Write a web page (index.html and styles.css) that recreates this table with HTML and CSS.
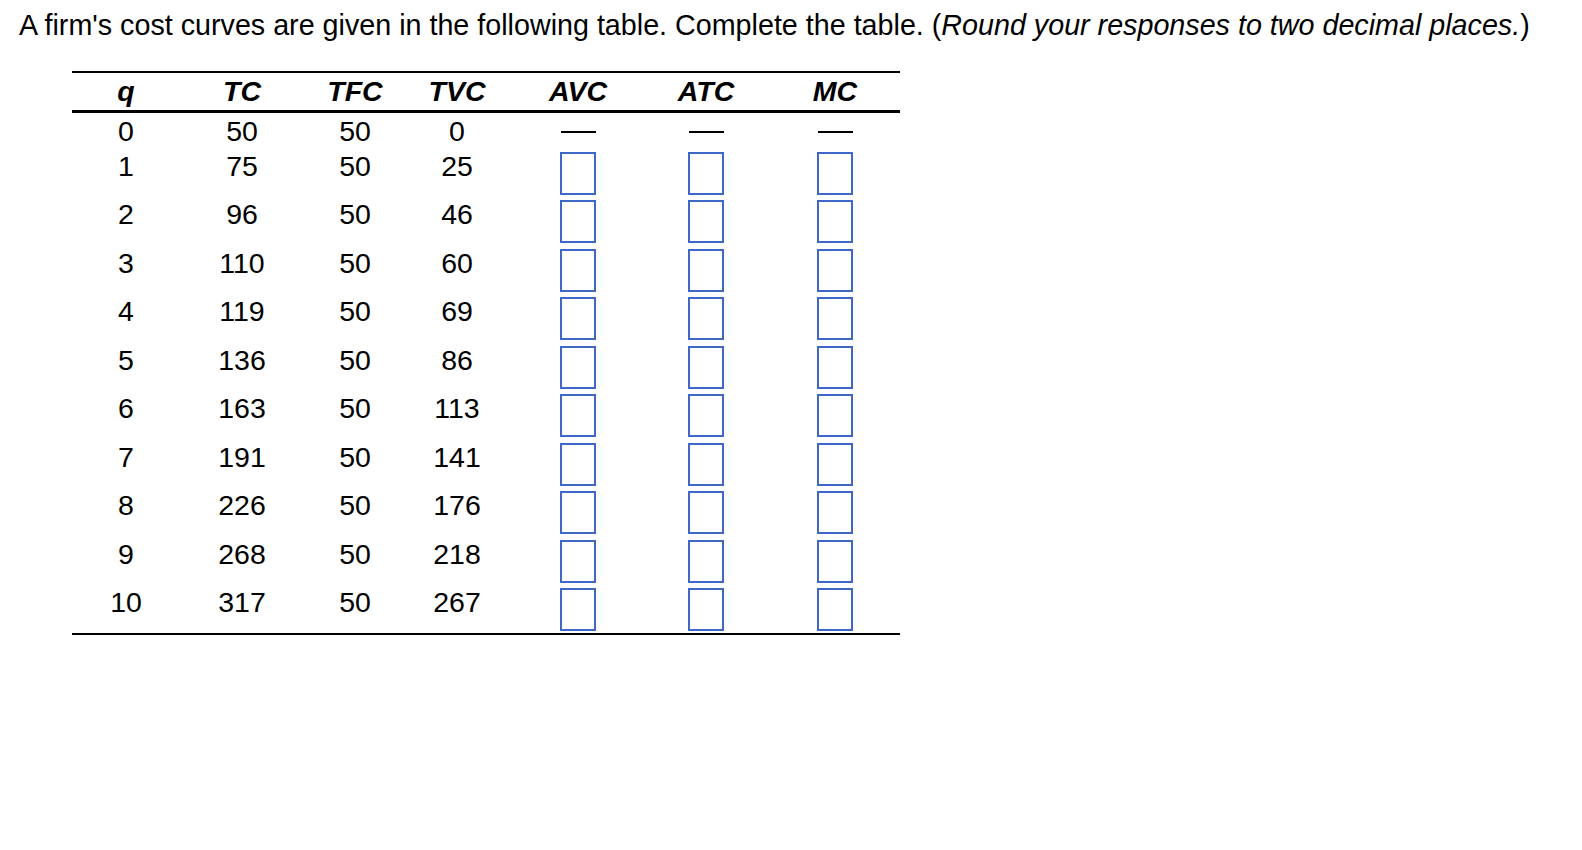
FILE: index.html
```html
<!DOCTYPE html>
<html lang="en">
<head>
<meta charset="utf-8">
<title>Cost curves</title>
<link rel="stylesheet" href="styles.css">
</head>
<body>
<div class="page">
  <p class="prompt">A firm's cost curves are given in the following table. Complete the table. (<em>Round your responses to two decimal places.</em>)</p>
  <div class="cost-table">
    <div class="row head">
      <div class="cell">q</div><div class="cell">TC</div><div class="cell">TFC</div><div class="cell">TVC</div><div class="cell">AVC</div><div class="cell mid">ATC</div><div class="cell last">MC</div>
    </div>
    <div class="row first">
      <div class="cell">0</div><div class="cell">50</div><div class="cell">50</div><div class="cell">0</div>
      <div class="cell"><span class="dash" aria-label="—"></span></div><div class="cell mid"><span class="dash" aria-label="—"></span></div><div class="cell last"><span class="dash" aria-label="—"></span></div>
    </div>
    <div class="row data"><div class="cell">1</div><div class="cell">75</div><div class="cell">50</div><div class="cell">25</div><div class="cell"><input class="answer" type="text"></div><div class="cell mid"><input class="answer" type="text"></div><div class="cell last"><input class="answer" type="text"></div></div>
    <div class="row data"><div class="cell">2</div><div class="cell">96</div><div class="cell">50</div><div class="cell">46</div><div class="cell"><input class="answer" type="text"></div><div class="cell mid"><input class="answer" type="text"></div><div class="cell last"><input class="answer" type="text"></div></div>
    <div class="row data"><div class="cell">3</div><div class="cell">110</div><div class="cell">50</div><div class="cell">60</div><div class="cell"><input class="answer" type="text"></div><div class="cell mid"><input class="answer" type="text"></div><div class="cell last"><input class="answer" type="text"></div></div>
    <div class="row data"><div class="cell">4</div><div class="cell">119</div><div class="cell">50</div><div class="cell">69</div><div class="cell"><input class="answer" type="text"></div><div class="cell mid"><input class="answer" type="text"></div><div class="cell last"><input class="answer" type="text"></div></div>
    <div class="row data"><div class="cell">5</div><div class="cell">136</div><div class="cell">50</div><div class="cell">86</div><div class="cell"><input class="answer" type="text"></div><div class="cell mid"><input class="answer" type="text"></div><div class="cell last"><input class="answer" type="text"></div></div>
    <div class="row data"><div class="cell">6</div><div class="cell">163</div><div class="cell">50</div><div class="cell">113</div><div class="cell"><input class="answer" type="text"></div><div class="cell mid"><input class="answer" type="text"></div><div class="cell last"><input class="answer" type="text"></div></div>
    <div class="row data"><div class="cell">7</div><div class="cell">191</div><div class="cell">50</div><div class="cell">141</div><div class="cell"><input class="answer" type="text"></div><div class="cell mid"><input class="answer" type="text"></div><div class="cell last"><input class="answer" type="text"></div></div>
    <div class="row data"><div class="cell">8</div><div class="cell">226</div><div class="cell">50</div><div class="cell">176</div><div class="cell"><input class="answer" type="text"></div><div class="cell mid"><input class="answer" type="text"></div><div class="cell last"><input class="answer" type="text"></div></div>
    <div class="row data"><div class="cell">9</div><div class="cell">268</div><div class="cell">50</div><div class="cell">218</div><div class="cell"><input class="answer" type="text"></div><div class="cell mid"><input class="answer" type="text"></div><div class="cell last"><input class="answer" type="text"></div></div>
    <div class="row data"><div class="cell">10</div><div class="cell">317</div><div class="cell">50</div><div class="cell">267</div><div class="cell"><input class="answer" type="text"></div><div class="cell mid"><input class="answer" type="text"></div><div class="cell last"><input class="answer" type="text"></div></div>
  </div>
</div>
</body>
</html>
```

FILE: styles.css
```css
html, body {
  margin: 0;
  padding: 0;
  background: #ffffff;
}

body {
  font-family: "Liberation Sans", Arial, sans-serif;
  color: #000000;
  font-size: 28.5px;
}

.page {
  padding: 11px 0 0 19px;
}

.prompt {
  margin: 0;
  font-size: 28.7px;
  line-height: 28px;
  white-space: nowrap;
}

.prompt em {
  font-style: italic;
}

.cost-table {
  margin-top: 32px;
  margin-left: 53px;
  width: 828px;
  border-bottom: 2px solid #000000;
}

.row {
  display: grid;
  grid-template-columns: 108px 124px 102px 102px 140px 112px 140px;
}

.cell {
  display: flex;
  justify-content: center;
  align-items: flex-start;
}

.cell.mid {
  padding-left: 4px;
}

.cell.last {
  padding-left: 10px;
}

.head {
  border-top: 2px solid #000000;
  border-bottom: 3px solid #000000;
  height: 37px;
  box-sizing: content-box;
  font-weight: bold;
  font-style: italic;
}

.head .cell {
  line-height: 37px;
}

.first {
  height: 36px;
}

.first .cell {
  line-height: 36px;
  align-items: center;
}

.dash {
  display: block;
  width: 35px;
  height: 2px;
  background: #000000;
  margin-top: 2px;
}

.data {
  height: 48.44px;
}

.data .cell {
  line-height: 35px;
}

.answer {
  display: block;
  box-sizing: border-box;
  width: 36px;
  height: 43px;
  margin: 3px 0 0 0;
  padding: 0;
  border: 2px solid #3f66c9;
  border-radius: 0;
  background: #ffffff;
  outline: none;
  font-family: "Liberation Sans", Arial, sans-serif;
  font-size: 20px;
}
```
